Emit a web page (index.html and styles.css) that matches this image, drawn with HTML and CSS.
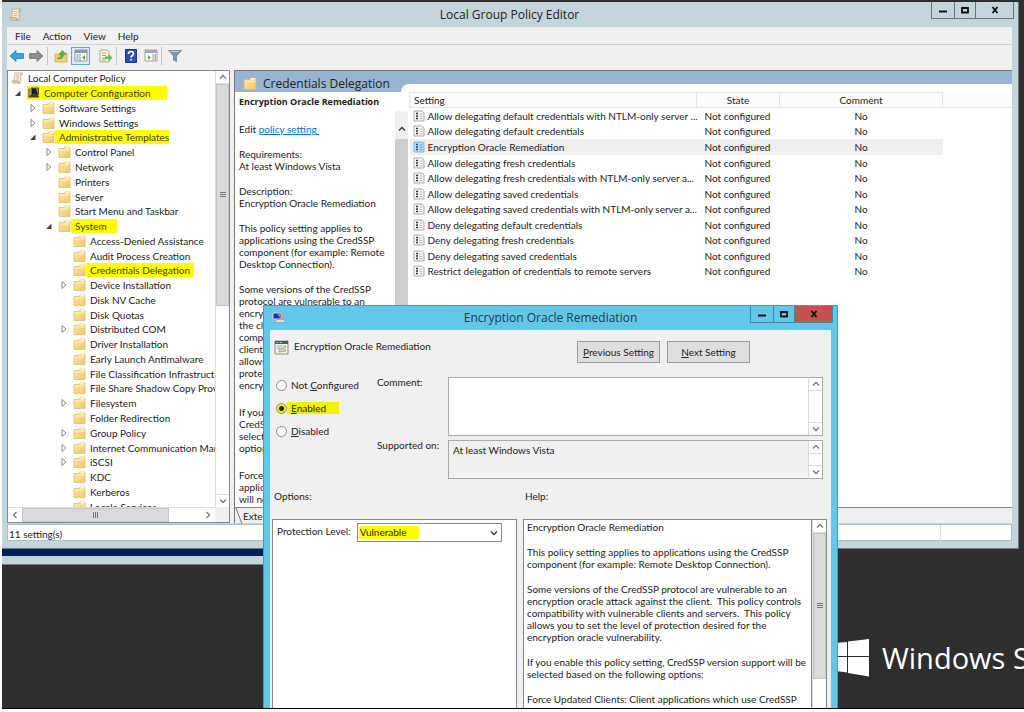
FILE: index.html
```html
<!DOCTYPE html>
<html lang="en">
<head>
<meta charset="utf-8">
<title>Local Group Policy Editor</title>
<link rel="stylesheet" href="styles.css">
</head>
<body>
<svg class="defs" width="0" height="0" aria-hidden="true">
  <defs>
    <linearGradient id="gold" x1="0" y1="0" x2="1" y2="1"><stop offset="0" stop-color="#fdeaa8"/><stop offset="1" stop-color="#efc567"/></linearGradient>
    <symbol id="folder" viewBox="0 0 13 12"><path d="M1 2.500L1 11.500H12V1H7L6 2.500Z" fill="url(#gold)" stroke="#e0bb6c" stroke-width=".8"/><path d="M7.500 1h4v1.400h-4z" fill="#fff6d8"/><path d="M1.500 4h10" stroke="#fff0bd"/></symbol>
    <symbol id="scroll" viewBox="0 0 13 13"><path d="M3.500 1H12l-.8 2H10v8.500H2.500z" fill="#f3ecd8" stroke="#b7ac8c" stroke-width=".8"/><path d="M1 9.500h6.500v1.500q0 1.500 1.500 1H2Q.7 11.500 1 9.500z" fill="#d9cfae" stroke="#a99f80" stroke-width=".7"/><path d="M5 3.500h3.500M5 5.500h3.500M4.500 7.500h3.500" stroke="#bdb497" stroke-width=".8"/><path d="M10 1.500h2v2h-2z" fill="#b8b09a"/></symbol>
    <symbol id="pc" viewBox="0 0 13 12"><path d="M1 1.500h2v9H1z" fill="#8d9440"/><path d="M4 1h7.500v6.500H4z" fill="#8b8f30" stroke="#5a5e20"/><path d="M5 1.500h3.500L11 7H5z" fill="#101a50"/><path d="M2 9.500l2-2h7l1 3H2z" fill="#3c4020"/></symbol>
    <symbol id="closed" viewBox="0 0 8 10"><path d="M2 1.500v7L6 5z" fill="#fff" stroke="#888"/></symbol>
    <symbol id="open" viewBox="0 0 8 10"><path d="M6.500 2.500v5.500H1z" fill="#444"/></symbol>
    <symbol id="up" viewBox="0 0 10 10"><path d="M2 6.500l3-3 3 3" fill="none" stroke="currentColor" stroke-width="1.300"/></symbol>
    <symbol id="down" viewBox="0 0 10 10"><path d="M2 3.500l3 3 3-3" fill="none" stroke="currentColor" stroke-width="1.300"/></symbol>
    <symbol id="left" viewBox="0 0 10 10"><path d="M6.500 2l-3 3 3 3" fill="none" stroke="currentColor" stroke-width="1.300"/></symbol>
    <symbol id="right" viewBox="0 0 10 10"><path d="M3.500 2l3 3-3 3" fill="none" stroke="currentColor" stroke-width="1.300"/></symbol>
    <symbol id="doc" viewBox="0 0 12 12"><path d="M1 1h8l2 2v8H1z" fill="#fafafa" stroke="#aaa"/><path d="M3 3.500h2M3 6h2M3 8.500h2" stroke="#333" stroke-width="1.400"/><path d="M6.500 4h3M6.500 6.300h3M6.500 8.700h3" stroke="#aaa" stroke-width=".9"/></symbol>
    <symbol id="docsel" viewBox="0 0 12 12"><path d="M1 1h8l2 2v8H1z" fill="#b9dcf8" stroke="#7fb2dd"/><path d="M9 0l3 1v2z" fill="#dfe04a"/><path d="M3 3.500h2M3 6h2M3 8.500h2" stroke="#164a80" stroke-width="1.400"/><path d="M6.500 4h3M6.500 6.300h3M6.500 8.700h3" stroke="#5a94c6" stroke-width=".9"/></symbol>
    <symbol id="min" viewBox="0 0 10 10"><path d="M1 6.500h8" stroke="currentColor" stroke-width="2"/></symbol>
    <symbol id="max" viewBox="0 0 10 10"><path d="M2 3h6v4.500H2z" fill="none" stroke="currentColor" stroke-width="1.800"/></symbol>
    <symbol id="close" viewBox="0 0 10 10"><path d="M2.500 2l5 6M7.500 2l-5 6" stroke="currentColor" stroke-width="1.900"/></symbol>
  </defs>
</svg>

<main class="desktop">
  <div class="brand">
    <svg width="34" height="40" viewBox="0 0 34 40"><path d="M0 5l11-1v14H0zM12 3.500L33 1v17H12zM0 19h11v15.500L0 33zM12 19h21v19.500L12 35z" fill="#fff"/></svg>
    <span>Windows Server</span>
  </div>

  <div class="behind"></div>

  <section class="window editor">
    <header class="titlebar">
      <svg class="app-icon" width="13" height="13"><use href="#scroll"/></svg>
      <h1>Local Group Policy Editor</h1>
      <div class="controls">
        <button aria-label="Minimize"><svg width="10" height="10"><use href="#min"/></svg></button>
        <button aria-label="Maximize"><svg width="10" height="10"><use href="#max"/></svg></button>
        <button class="close" aria-label="Close"><svg width="10" height="10"><use href="#close"/></svg></button>
      </div>
    </header>
    <nav class="menubar">
      <button>File</button><button>Action</button><button>View</button><button>Help</button>
    </nav>
    <div class="toolbar">
      <button aria-label="Back"><svg width="16" height="14" viewBox="0 0 16 14"><path d="M1 7l6-5.500v3h7.500v5H7v3z" fill="#35a3e6" stroke="#2382c4" stroke-width=".8"/></svg></button>
      <button aria-label="Forward"><svg width="16" height="14" viewBox="0 0 16 14"><path d="M15 7L9 1.500v3H1.500v5H9v3z" fill="#8d8d8d" stroke="#777" stroke-width=".8"/></svg></button>
      <i class="sep"></i>
      <button aria-label="Up"><svg width="14" height="14" viewBox="0 0 14 14"><path d="M1 5h4l1-1h7v9H1z" fill="#f0cd78" stroke="#d4a94d" stroke-width=".8"/><path d="M3 9.500q4 0 4-4H5L8.500 1.500 12 5.500H9.500Q9 11 3 9.500z" fill="#4db837" stroke="#378c28" stroke-width=".5"/></svg></button>
      <button class="active" aria-label="Show tree"><svg width="14" height="13" viewBox="0 0 14 13"><path d="M1 1h12v11H1z" fill="#fff" stroke="#8a949e"/><path d="M1 1h12v3H1z" fill="#8c9aa8"/><path d="M6 4.500V12" stroke="#8a949e"/><path d="M2.500 6h2M2.500 8h2M2.500 10h2" stroke="#4679aa"/><path d="M11 6v5L8 8.500z" fill="#4db837"/></svg></button>
      <button class="spaced" aria-label="Export list"><svg width="14" height="14" viewBox="0 0 14 14"><path d="M1 1h7l2 2v10H1z" fill="#fcf7e4" stroke="#b5a878"/><path d="M3 4h4.500M3 6.500h4M3 9h3M3 11h4" stroke="#9a9a8a"/><path d="M6 7.500h3.500V5L13.500 8.800 9.500 12.500V10H6z" fill="#62bd4b"/></svg></button>
      <i class="sep wide"></i>
      <button aria-label="Help"><svg width="12" height="14" viewBox="0 0 12 14"><path d="M.5.500h11v13H.500z" fill="#2c4fb4" stroke="#1c378c"/><path d="M3.500 5q0-2.500 2.500-2.500T8.500 4.800C8.500 6.500 6 6.500 6 8.500" fill="none" stroke="#fff" stroke-width="1.600"/><path d="M5.200 10h1.700v1.600H5.200z" fill="#fff"/></svg></button>
      <button class="spaced" aria-label="Show action pane"><svg width="14" height="13" viewBox="0 0 14 13"><path d="M1 1h12v11H1z" fill="#fff" stroke="#a0a0a0"/><path d="M1 1h12v3H1z" fill="#a2a9b0"/><path d="M9 4.500V12" stroke="#a0a0a0"/><path d="M10.500 6H12M10.500 8H12M10.500 10H12" stroke="#555"/><path d="M4 6v5l3-2.500z" fill="#4db837"/></svg></button>
      <i class="sep"></i>
      <button aria-label="Filter"><svg width="14" height="14" viewBox="0 0 14 14"><path d="M.5 1.500h13L8.500 7v5.500l-3-1.500V7z" fill="#7f97ab" stroke="#62788b" stroke-width=".7"/><path d="M2 2.500h9" stroke="#b9cad8"/></svg></button>
    </div>

    <div class="panes">
      <div class="treepane">
        <ul class="tree">
          <li class="l0"><svg width="13" height="13"><use href="#scroll"/></svg>Local Computer Policy</li>
          <li class="l1"><svg class="arr"><use href="#open"/></svg><span class="mark whole"><svg><use href="#pc"/></svg>Computer Configuration</span></li>
          <li class="l2"><svg class="arr"><use href="#closed"/></svg><svg><use href="#folder"/></svg>Software Settings</li>
          <li class="l2"><svg class="arr"><use href="#closed"/></svg><svg><use href="#folder"/></svg>Windows Settings</li>
          <li class="l2"><svg class="arr"><use href="#open"/></svg><svg><use href="#folder"/></svg><mark class="tight">Administrative Templates</mark></li>
          <li class="l3"><svg class="arr"><use href="#closed"/></svg><svg><use href="#folder"/></svg>Control Panel</li>
          <li class="l3"><svg class="arr"><use href="#closed"/></svg><svg><use href="#folder"/></svg>Network</li>
          <li class="l3"><svg class="arr"></svg><svg><use href="#folder"/></svg>Printers</li>
          <li class="l3"><svg class="arr"></svg><svg><use href="#folder"/></svg>Server</li>
          <li class="l3"><svg class="arr"></svg><svg><use href="#folder"/></svg>Start Menu and Taskbar</li>
          <li class="l3"><svg class="arr"><use href="#open"/></svg><svg><use href="#folder"/></svg><mark class="long">System</mark></li>
          <li class="l4"><svg class="arr"></svg><svg><use href="#folder"/></svg>Access-Denied Assistance</li>
          <li class="l4"><svg class="arr"></svg><svg><use href="#folder"/></svg>Audit Process Creation</li>
          <li class="l4"><svg class="arr"></svg><svg><use href="#folder"/></svg><mark>Credentials Delegation</mark></li>
          <li class="l4"><svg class="arr"><use href="#closed"/></svg><svg><use href="#folder"/></svg>Device Installation</li>
          <li class="l4"><svg class="arr"></svg><svg><use href="#folder"/></svg>Disk NV Cache</li>
          <li class="l4"><svg class="arr"></svg><svg><use href="#folder"/></svg>Disk Quotas</li>
          <li class="l4"><svg class="arr"><use href="#closed"/></svg><svg><use href="#folder"/></svg>Distributed COM</li>
          <li class="l4"><svg class="arr"></svg><svg><use href="#folder"/></svg>Driver Installation</li>
          <li class="l4"><svg class="arr"></svg><svg><use href="#folder"/></svg>Early Launch Antimalware</li>
          <li class="l4"><svg class="arr"></svg><svg><use href="#folder"/></svg>File Classification Infrastructure</li>
          <li class="l4"><svg class="arr"></svg><svg><use href="#folder"/></svg>File Share Shadow Copy Provider</li>
          <li class="l4"><svg class="arr"><use href="#closed"/></svg><svg><use href="#folder"/></svg>Filesystem</li>
          <li class="l4"><svg class="arr"></svg><svg><use href="#folder"/></svg>Folder Redirection</li>
          <li class="l4"><svg class="arr"><use href="#closed"/></svg><svg><use href="#folder"/></svg>Group Policy</li>
          <li class="l4"><svg class="arr"><use href="#closed"/></svg><svg><use href="#folder"/></svg>Internet Communication Management</li>
          <li class="l4"><svg class="arr"><use href="#closed"/></svg><svg><use href="#folder"/></svg>iSCSI</li>
          <li class="l4"><svg class="arr"></svg><svg><use href="#folder"/></svg>KDC</li>
          <li class="l4"><svg class="arr"></svg><svg><use href="#folder"/></svg>Kerberos</li>
          <li class="l4"><svg class="arr"></svg><svg><use href="#folder"/></svg>Locale Services</li>
        </ul>
        <div class="vbar">
          <button aria-label="Scroll up"><svg><use href="#up"/></svg></button>
          <div class="thumb tree-thumb"><i class="grip"></i></div>
          <div class="track"></div>
          <button aria-label="Scroll down"><svg><use href="#down"/></svg></button>
        </div>
        <div class="hbar">
          <button aria-label="Scroll left"><svg><use href="#left"/></svg></button>
          <div class="thumb"><i class="grip"></i></div>
          <div class="track"></div>
          <button aria-label="Scroll right"><svg><use href="#right"/></svg></button>
        </div>
      </div>

      <div class="detail">
        <div class="info">
          <h2><svg width="14" height="13"><use href="#folder"/></svg>Credentials Delegation</h2>
          <div class="info-body">
            <h3>Encryption Oracle Remediation</h3>
            <div class="info-scroll">
              <div class="prose">
                <p>Edit <a href="#">policy setting&nbsp;</a></p>
                <p>Requirements:<br>At least Windows Vista</p>
                <p>Description:<br>Encryption Oracle Remediation</p>
                <p>This policy setting applies to<br>applications using the CredSSP<br>component (for example: Remote<br>Desktop Connection).</p>
                <p>Some versions of the CredSSP<br>protocol are vulnerable to an<br>encryption oracle attack against<br>the client.&nbsp; This policy controls<br>compatibility with vulnerable<br>clients and servers.&nbsp; This policy<br>allows you to set the level of<br>protection desired for the<br>encryption oracle vulnerability.</p>
                <p>If you enable this policy setting,<br>CredSSP version support will be<br>selected based on the following<br>options:</p>
                <p>Force Updated Clients: Client<br>applications which use CredSSP<br>will not be able to fall back</p>
              </div>
              <div class="vbar flat">
                <button aria-label="Scroll description up"><svg><use href="#up"/></svg></button>
                <div class="thumb"></div>
              </div>
            </div>
          </div>
        </div>
        <div class="list">
          <table>
            <colgroup><col class="c-icon"><col class="c-name"><col class="c-state"><col class="c-comment"><col></colgroup>
            <thead><tr><th colspan="2" class="first">Setting</th><th>State</th><th>Comment</th><th></th></tr></thead>
            <tbody>
              <tr><td><svg><use href="#doc"/></svg></td><td>Allow delegating default credentials with NTLM-only server ...</td><td>Not configured</td><td>No</td><td></td></tr>
              <tr><td><svg><use href="#doc"/></svg></td><td>Allow delegating default credentials</td><td>Not configured</td><td>No</td><td></td></tr>
              <tr class="selected"><td><svg><use href="#docsel"/></svg></td><td>Encryption Oracle Remediation</td><td>Not configured</td><td>No</td><td></td></tr>
              <tr><td><svg><use href="#doc"/></svg></td><td>Allow delegating fresh credentials</td><td>Not configured</td><td>No</td><td></td></tr>
              <tr><td><svg><use href="#doc"/></svg></td><td>Allow delegating fresh credentials with NTLM-only server a...</td><td>Not configured</td><td>No</td><td></td></tr>
              <tr><td><svg><use href="#doc"/></svg></td><td>Allow delegating saved credentials</td><td>Not configured</td><td>No</td><td></td></tr>
              <tr><td><svg><use href="#doc"/></svg></td><td>Allow delegating saved credentials with NTLM-only server a...</td><td>Not configured</td><td>No</td><td></td></tr>
              <tr><td><svg><use href="#doc"/></svg></td><td>Deny delegating default credentials</td><td>Not configured</td><td>No</td><td></td></tr>
              <tr><td><svg><use href="#doc"/></svg></td><td>Deny delegating fresh credentials</td><td>Not configured</td><td>No</td><td></td></tr>
              <tr><td><svg><use href="#doc"/></svg></td><td>Deny delegating saved credentials</td><td>Not configured</td><td>No</td><td></td></tr>
              <tr><td><svg><use href="#doc"/></svg></td><td>Restrict delegation of credentials to remote servers</td><td>Not configured</td><td>No</td><td></td></tr>
            </tbody>
          </table>
        </div>
        <div class="tabs"><svg width="8" height="16" viewBox="0 0 8 16"><path d="M1 0l6 16" stroke="#777" fill="none"/></svg><button>Extended</button><button>Standard</button></div>
      </div>
    </div>
    <footer class="status"><span>11 setting(s)</span><span></span></footer>
  </section>

  <section class="window dialog">
    <header class="titlebar">
      <svg class="app-icon" width="14" height="12" viewBox="0 0 14 12"><path d="M1 1h8v6H1z" fill="#1d2f9c" stroke="#d4d9ea"/><path d="M5 2h3v4z" fill="#6e8de8"/><path d="M9 3l3-1v7H9z" fill="#c7a29c"/><path d="M3 10l2-2.500h7l1 3H3z" fill="#d8dce6" stroke="#8a8fa5" stroke-width=".6"/></svg>
      <h1>Encryption Oracle Remediation</h1>
      <div class="controls">
        <button aria-label="Minimize"><svg width="10" height="10"><use href="#min"/></svg></button>
        <button aria-label="Maximize"><svg width="10" height="10"><use href="#max"/></svg></button>
        <button class="close" aria-label="Close"><svg width="10" height="10"><use href="#close"/></svg></button>
      </div>
    </header>
    <form class="dialog-body">
      <div class="policy-head">
        <svg width="15" height="15" viewBox="0 0 15 15"><path d="M1 1h13v13H1z" fill="#f4f2e2" stroke="#8a8f8a"/><path d="M1 1h13v3H1z" fill="#40606e"/><path d="M2.500 2.500h2M6 2.500h2" stroke="#9cd0a0"/><path d="M3 6h5M3 8h3" stroke="#a7a78f"/><path d="M5 12q-1-4 3-4t4 3z" fill="#c9cdb8" stroke="#8c907c" stroke-width=".6"/><path d="M9 7l2-1 1 2" fill="none" stroke="#6fae55"/></svg>
        <span class="policy-name">Encryption Oracle Remediation</span>
        <button type="button"><u>P</u>revious Setting</button>
        <button type="button"><u>N</u>ext Setting</button>
      </div>
      <div class="fields">
        <fieldset class="radios">
          <label><input type="radio" name="state"><span>Not <u>C</u>onfigured</span></label>
          <label class="on"><input type="radio" name="state" checked><span><u>E</u>nabled</span></label>
          <label><input type="radio" name="state"><span><u>D</u>isabled</span></label>
        </fieldset>
        <label for="comment" class="flabel">Comment:</label>
        <div class="box tall">
          <textarea id="comment"></textarea>
          <div class="vbar"><button type="button" aria-label="Scroll comment up"><svg><use href="#up"/></svg></button><div class="track"></div><button type="button" aria-label="Scroll comment down"><svg><use href="#down"/></svg></button></div>
        </div>
        <label for="supported" class="flabel">Supported on:</label>
        <div class="box short">
          <textarea id="supported" readonly>At least Windows Vista</textarea>
          <div class="vbar"><button type="button" aria-label="Scroll supported up"><svg><use href="#up"/></svg></button><div class="track"></div><button type="button" aria-label="Scroll supported down"><svg><use href="#down"/></svg></button></div>
        </div>
      </div>
      <div class="split">
        <div class="col options">
          <h4>Options:</h4>
          <div class="panel">
            <label for="level">Protection Level:</label>
            <div class="select">
              <select id="level"><option>Vulnerable</option><option>Mitigated</option><option>Force Updated Clients</option></select>
              <svg width="10" height="10"><use href="#down"/></svg>
            </div>
          </div>
        </div>
        <div class="col help">
          <h4>Help:</h4>
          <div class="panel">
            <div class="prose">
              <p>Encryption Oracle Remediation</p>
              <p>This policy setting applies to applications using the CredSSP<br>component (for example: Remote Desktop Connection).</p>
              <p>Some versions of the CredSSP protocol are vulnerable to an<br>encryption oracle attack against the client.&nbsp; This policy controls<br>compatibility with vulnerable clients and servers.&nbsp; This policy<br>allows you to set the level of protection desired for the<br>encryption oracle vulnerability.</p>
              <p>If you enable this policy setting, CredSSP version support will be<br>selected based on the following options:</p>
              <p>Force Updated Clients: Client applications which use CredSSP<br>will not be able to fall back to the insecure protocols and</p>
            </div>
            <div class="vbar">
              <button type="button" aria-label="Scroll help up"><svg><use href="#up"/></svg></button>
              <div class="thumb help-thumb"><i class="grip"></i></div>
              <div class="track"></div>
            </div>
          </div>
        </div>
      </div>
    </form>
  </section>
</main>
</body>
</html>
```
FILE: styles.css
```css
* { box-sizing: border-box; }
html, body { height: 100%; }
body {
  margin: 0;
  padding: 0 0 3px 2px;
  background: #fff;
  color: #222;
  font: 10px/12px Lato, "Open Sans", sans-serif;
}
button, select, textarea { font: inherit; color: inherit; margin: 0; padding: 0; border: 0; border-radius: 0; background: none; }
h1, h2, h3, h4, p, ul, fieldset { margin: 0; padding: 0; border: 0; font-weight: 400; }
ul { list-style: none; }
svg { display: block; flex: none; }
.defs { position: absolute; }

.desktop { position: relative; height: 100%; overflow: hidden; background: #2e2e2e; border-bottom: 1px solid #000; }

.brand { position: absolute; left: 834px; top: 638px; display: flex; align-items: center; gap: 12px; color: #fff; font: 400 29px/40px "Open Sans", "Noto Sans", sans-serif; white-space: nowrap; }
.behind { position: absolute; left: 0; top: 540px; width: 50%; height: 25px; background: #c3d5db; border-top: 16px solid #00205a; border-bottom: 1px solid #777; }

.window { position: absolute; display: flex; flex-direction: column; }
.editor { left: 0; right: 5px; top: 2px; height: 547px; padding: 0 6px 7px 5px; background: #c3d5db; border: solid #6f787c; border-width: 0 1px 1px 0; }
.titlebar { position: relative; display: flex; align-items: center; justify-content: center; height: 25px; flex: none; }
.titlebar h1 { font: 12px/16px "Open Sans", "Noto Sans", sans-serif; }
.app-icon { position: absolute; left: 2px; top: 6px; }
.controls { position: absolute; right: -2px; top: 0; display: flex; border: 1px solid #6b7478; border-top: 0; }
.controls button { display: grid; place-items: center; width: 23px; height: 16px; border-right: 1px solid #6b7478; color: #111; }
.controls button:nth-child(2) { width: 21px; }
.controls .close { width: 37px; border-right: 0; }

.menubar { display: flex; flex: none; gap: 12px; height: 18px; padding: 0 8px; background: #f0f0f0; border-bottom: 1px solid #d4d4d4; }
.toolbar { display: flex; flex: none; align-items: center; gap: 3px; height: 25px; padding: 0 2px 4px; background: #f0f0f0; }
.toolbar button { display: grid; place-items: center; height: 18px; }
.toolbar .active { width: 19px; background: #d7ebfa; border: 1px solid #57a5dd; }
.toolbar .spaced { margin-left: 4px; }
.toolbar .active + .spaced { margin-left: 6px; }
.sep { width: 1px; height: 18px; margin: 0 3px 0 0; background: #c4c4c4; }
.sep.wide { margin-right: 5px; }

.panes { display: flex; flex: 1; min-height: 0; gap: 4px; background: #f0f0f0; }
.treepane { display: grid; grid-template: minmax(0, 1fr) 15px / minmax(0, 1fr) 14px; width: 223px; flex: none; overflow: hidden; background: #f0f0f0; border: 1px solid #828790; }
.tree { display: grid; grid-auto-rows: 1fr; height: 443px; min-height: 0; background: #fff; overflow: hidden; }
.tree li { display: flex; align-items: center; gap: 4px; min-height: 0; white-space: nowrap; line-height: 14px; }
.tree svg { width: 13px; height: 12px; }
.tree .arr { width: 8px; height: 10px; margin-right: 1px; }
.l0 { padding-left: 3px; }
.l1 { padding-left: 6px; }
.l2 { padding-left: 21px; }
.l3 { padding-left: 37px; }
.l4 { padding-left: 52px; }
mark, .mark { background: #ff0; color: #3c3c00; }
mark { margin-left: -4px; padding: 0 4px; }
mark.tight { padding-right: 0; }
mark.long { padding-right: 10px; }
.mark.whole { display: flex; align-items: center; gap: 4px; padding-right: 16px; }

.vbar { display: flex; flex-direction: column; width: 14px; flex: none; border-left: 1px solid #dcdcdc; background: #fff; color: #777; }
.vbar button, .hbar button { display: grid; place-items: center; flex: none; height: 13px; background: #fff; border-bottom: 1px solid #ddd; }
.vbar svg, .hbar svg { width: 10px; height: 10px; }
.vbar .thumb, .hbar .thumb { display: grid; place-items: center; background: #dadada; border: 1px solid #c4c4c4; }
.track { flex: 1; }
.vbar .track + button { border-top: 1px solid #ddd; border-bottom: 0; }
.tree-thumb { height: 51%; }
.grip { width: 6px; height: 6px; background: repeating-linear-gradient(#777 0 1px, transparent 1px 2px); }
.hbar { display: flex; background: #fff; border-top: 1px solid #dcdcdc; color: #777; }
.hbar button { width: 14px; height: 14px; border: 0; }
.hbar .thumb { width: 147px; }
.hbar .grip { background: repeating-linear-gradient(90deg, #777 0 1px, transparent 1px 2px); }

.detail { display: grid; grid-template: minmax(0, 1fr) 16px / 166px minmax(0, 1fr); flex: 1; min-width: 0; background: #99b3d2; border: solid #777; border-width: 1px 0 0 1px; }
.info { display: flex; flex-direction: column; min-height: 0; }
.info h2 { display: flex; align-items: center; gap: 6px; height: 21px; flex: none; padding: 4px 0 0 8px; font: 12px/16px "Open Sans", "Noto Sans", sans-serif; white-space: nowrap; }
.info-body { display: flex; flex-direction: column; flex: 1; min-height: 0; background: #fff; }
.info h3 { padding: 4px 0 3px 4px; font: 700 9px/12px "Open Sans", "Noto Sans", sans-serif; white-space: nowrap; }
.info-scroll { display: flex; flex: 1; min-height: 0; margin-right: -7px; }
.info-scroll .prose { flex: 1; min-width: 0; padding: 12px 0 0 4px; }
.prose { overflow: hidden; white-space: nowrap; }
.prose p + p { margin-top: 13px; }
.info-scroll .prose p:nth-child(n+6) { margin-top: 15px; }
a { color: #0a6cd6; }
.vbar.flat { position: relative; width: 13px; border: 0; color: #333; }
.flat button { height: 28px; padding-top: 8px; border: 0; background: #f0f0f0; }
.vbar.flat .thumb { flex: 1; border: 0; background: #cdcdcd; }

.list { margin-top: 13px; padding: 8px 0 0 8px; background: #fff; border-top-left-radius: 8px; min-height: 0; }
table { width: 100%; height: 187px; table-layout: fixed; border-collapse: collapse; }
.c-icon { width: 16px; }
.c-name { width: 271px; }
.c-state { width: 83px; }
.c-comment { width: 163px; }
th { height: 15px; padding: 0; font-weight: 400; border: 1px solid #e4e4e4; background: #fcfcfc; }
th:last-child { border-top: 0; border-right: 0; }
th.first { text-align: left; padding-left: 4px; }
td { padding: 0; white-space: nowrap; }
td:nth-child(1) svg { width: 12px; height: 12px; margin-left: 3px; }
td:nth-child(2) { padding-left: 2px; }
td:nth-child(3) { padding-left: 8px; }
td:nth-child(4) { text-align: center; }
.selected td:not(:last-child) { background: #efefef; }
.tabs { grid-column: 1 / -1; display: flex; gap: 0; background: #f0f0f0; border-top: 1px solid #888; }
.tabs button { padding-right: 12px; }
.status { display: grid; grid-template-columns: minmax(0, 1fr) 71px; height: 17px; flex: none; margin-top: 1px; background: #fff; border: 1px solid #b5bcc0; }
.status span { padding-left: 1px; line-height: 18px; }
.status span + span { border-left: 1px solid #ddd; }

.dialog { left: 261px; top: 305px; bottom: -40px; width: 575px; padding: 0 6px; background: #63c8e8; border: 1px solid #4a9ab5; }
.dialog .titlebar { height: 24px; color: #16404e; }
.dialog .app-icon { left: 2px; }
.dialog .controls { right: -2px; border-color: #3a88a2; }
.dialog .controls button { border-color: #3a88a2; }
.dialog .controls .close { background: #c4524c; }
.dialog-body { display: flex; flex-direction: column; flex: 1; min-height: 0; background: #f0f0f0; padding: 10px 4px 0 4px; }
.policy-head { display: flex; align-items: flex-start; height: 37px; gap: 7px; }
.policy-head svg { margin-right: -2px; }
.policy-name { flex: 1; }
.policy-head button { width: 83px; height: 22px; margin-top: 1px; background: #dedede; border: 1px solid #9a9a9a; }
.policy-head button:last-child { margin-right: 77px; }
.fields { display: grid; grid-template: 59px 39px / 103px 71px minmax(0, 1fr); row-gap: 4px; }
.radios { grid-row: 1 / 3; display: flex; flex-direction: column; gap: 9px; padding-top: 1px; }
.radios label { display: flex; align-items: center; gap: 4px; height: 14px; }
.radios input { appearance: none; width: 11px; height: 11px; margin: 0 0 0 2px; border: 1px solid #888; border-radius: 50%; background: #fff; }
.radios input:checked { background: radial-gradient(circle, #222 0 2px, #f2f200 3px); }
.radios .on span { background: #f2f200; padding-right: 13px; margin-left: -4px; padding-left: 4px; }
.flabel { white-space: nowrap; line-height: 10px; }
.box { display: flex; border: 1px solid #aaa; background: #fff; margin-right: 4px; }
.box textarea { flex: 1; resize: none; outline: 0; overflow: hidden; padding: 3px 4px; }
.short { background: #f0f0f0; }
.split { display: grid; grid-template-columns: 245px minmax(0, 1fr); gap: 6px; flex: 1; min-height: 0; margin-left: -2px; padding-top: 11px; }
.col { display: flex; flex-direction: column; min-height: 0; }
.col h4 { height: 29px; padding-left: 2px; }
.panel { display: flex; flex: 1; min-height: 0; background: #fff; border: 1px solid #888; }
.options .panel { align-items: flex-start; gap: 6px; padding: 3px 4px; white-space: nowrap; }
.options .panel label { padding-top: 2px; }
.select { position: relative; width: 145px; height: 19px; border: 1px solid #8a8a8a; padding: 2px 1px; }
.select select { appearance: none; width: 60px; height: 13px; line-height: 13px; background: #ff0; padding-left: 1px; }
.select svg { position: absolute; right: 2px; top: 4px; color: #333; }
.help .panel .prose { flex: 1; padding: 1px 0 0 3px; border-right: 1px solid #888; }
.help-thumb { height: 146px; }
```
